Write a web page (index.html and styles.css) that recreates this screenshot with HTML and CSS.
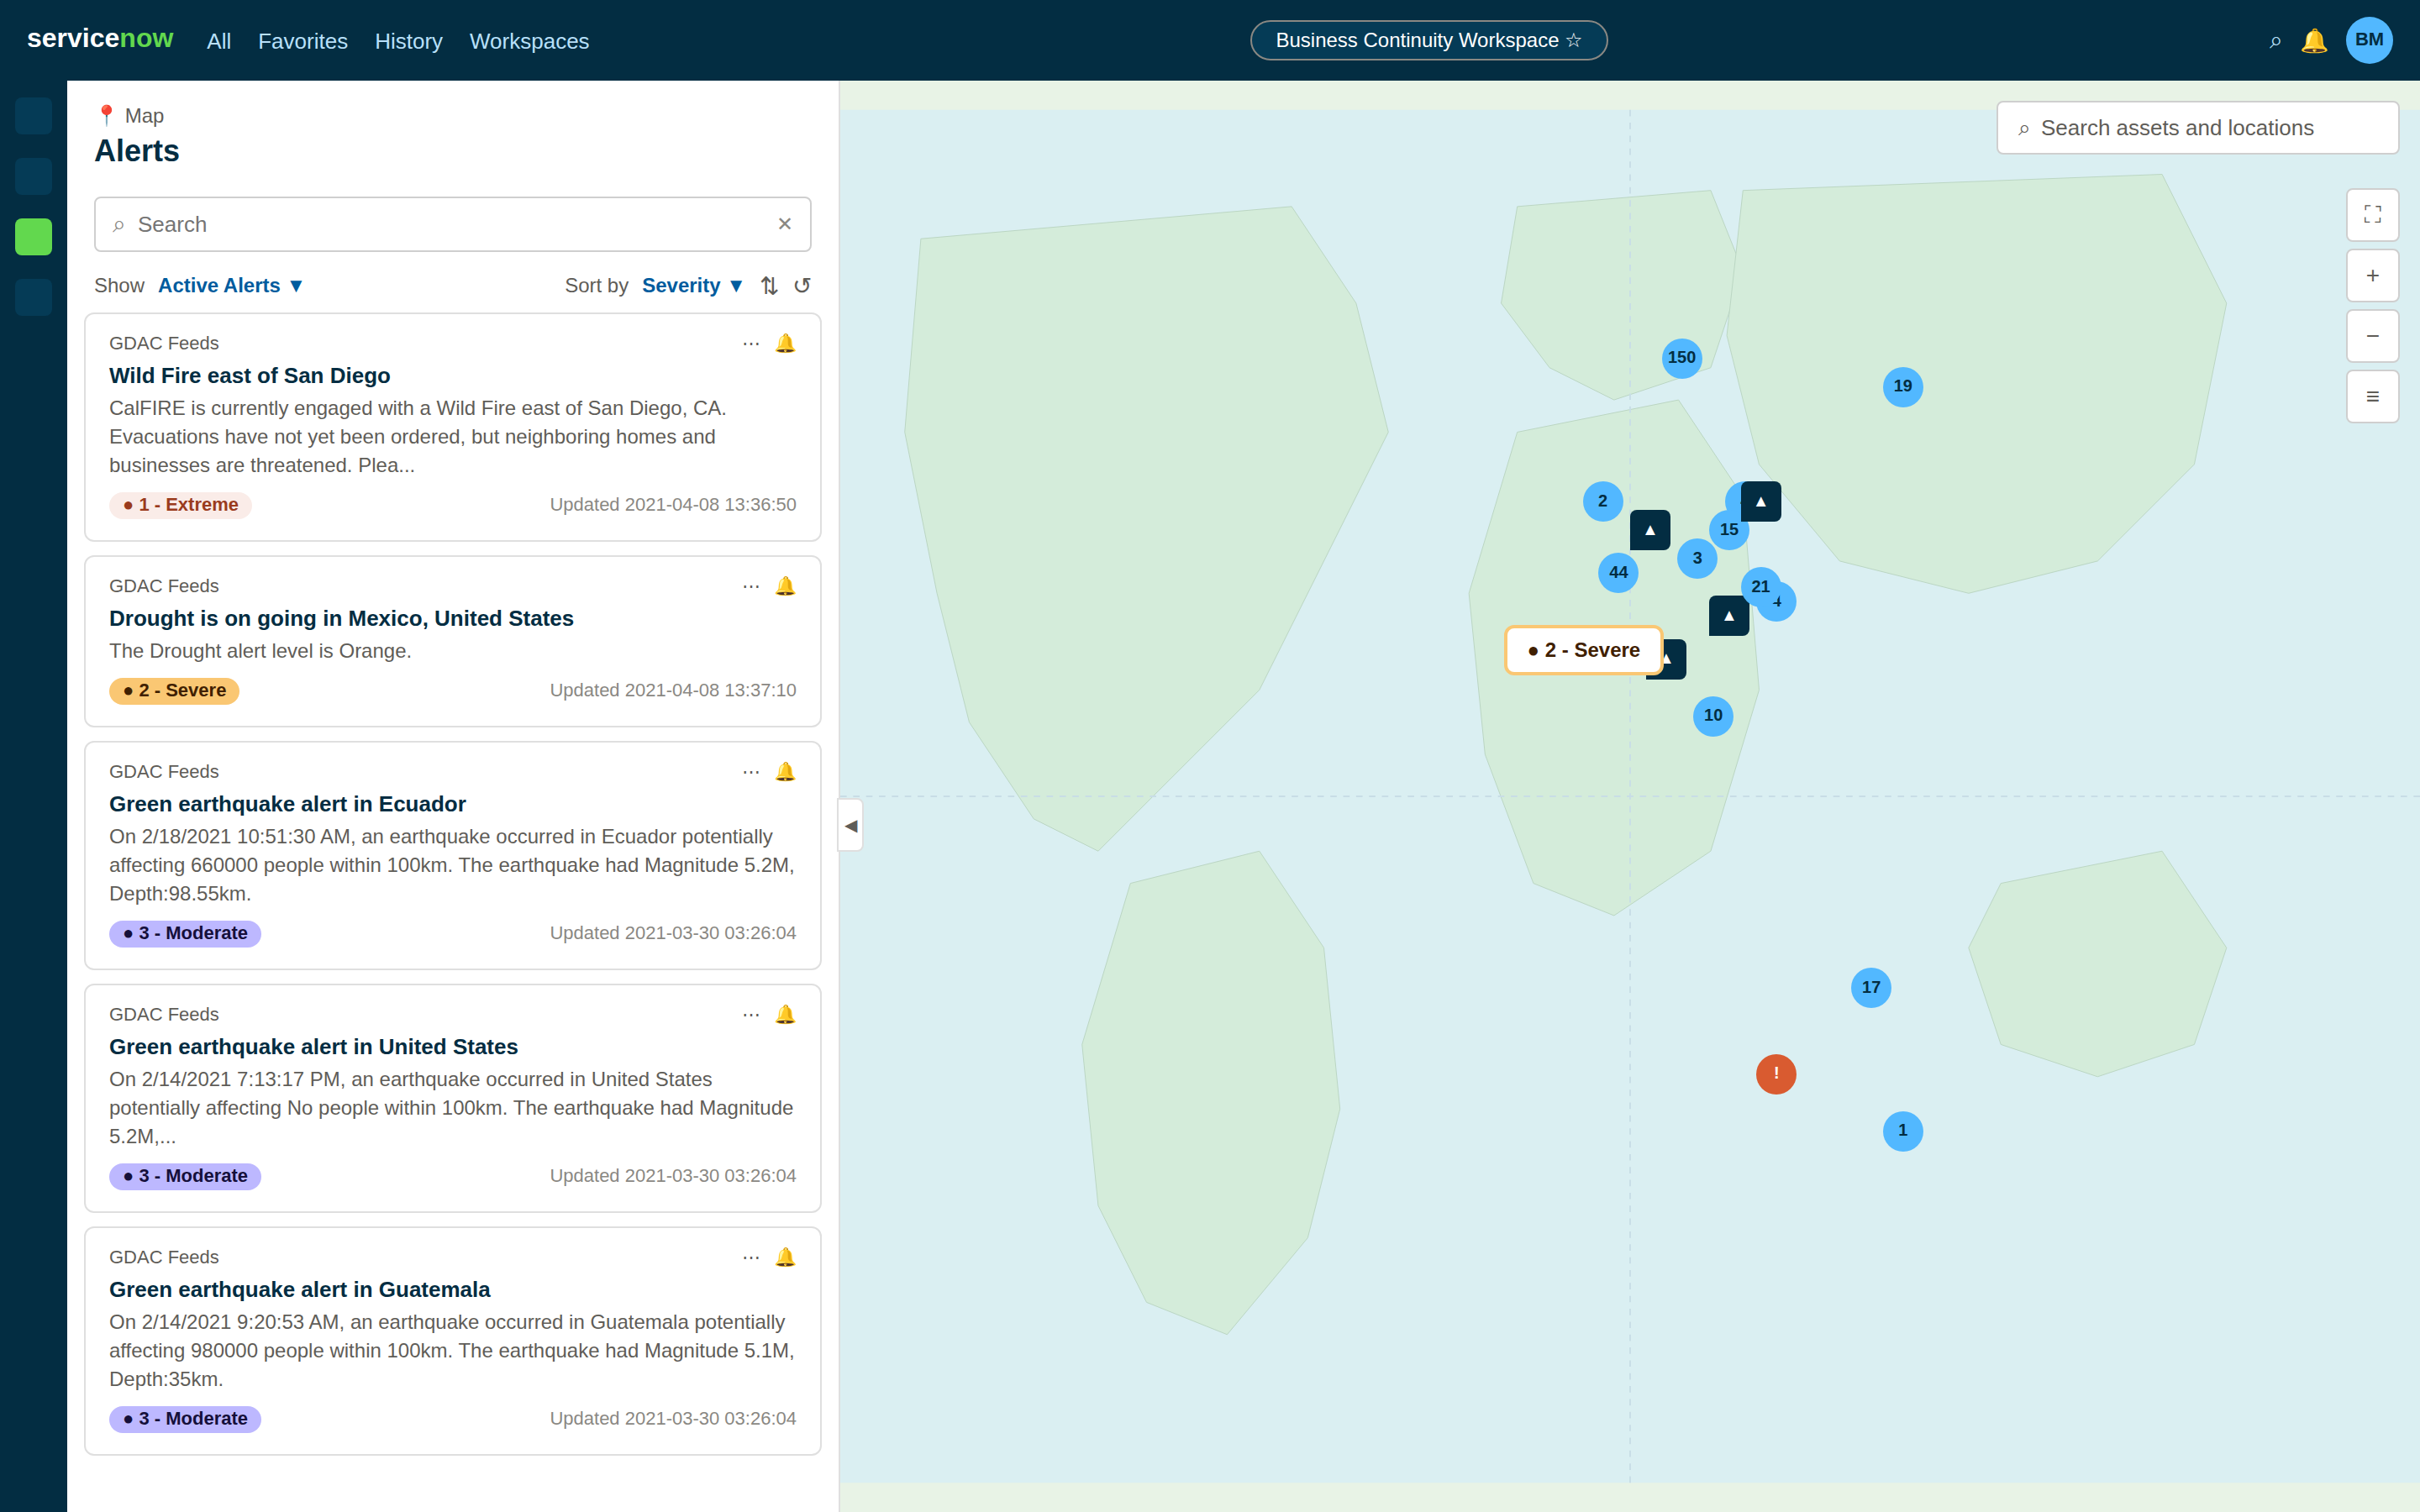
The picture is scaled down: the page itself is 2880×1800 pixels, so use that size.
FILE: index.html
```html
<!DOCTYPE html>
<html lang="en">
<head>
<meta charset="utf-8">
<title>Business Continuity Workspace</title>
<link rel="stylesheet" href="styles.css">
</head>
<body>
<div class="app">
  <header class="topbar">
    <div class="topbar-left">
      <a class="logo" href="#">service<span class="logo-accent">now</span></a>
      <nav class="nav">
        <a href="#">All</a>
        <a href="#">Favorites</a>
        <a href="#">History</a>
        <a href="#">Workspaces</a>
      </nav>
    </div>
    <button class="workspace-pill" type="button">Business Continuity Workspace ☆</button>
    <div class="topbar-right">
      <button class="icon-button" type="button" aria-label="Search">⌕</button>
      <button class="icon-button" type="button" aria-label="Notifications">🔔</button>
      <button class="avatar" type="button">BM</button>
    </div>
  </header>

  <div class="body">
    <nav class="rail">
      <a class="rail-item" href="#" aria-label="Home"></a>
      <a class="rail-item" href="#" aria-label="List"></a>
      <a class="rail-item active" href="#" aria-label="Map"></a>
      <a class="rail-item" href="#" aria-label="Reports"></a>
    </nav>

    <section class="panel">
      <div class="panel-header">
        <div class="crumb">📍 Map</div>
        <h1 class="panel-title">Alerts</h1>
      </div>
      <div class="search-box">
        <span class="search-icon">⌕</span>
        <input class="search-input" type="text" placeholder="Search" aria-label="Search alerts">
        <button class="clear" type="button" aria-label="Clear">✕</button>
      </div>
      <div class="filters">
        <div class="filter-group">
          <span>Show</span>
          <button class="filter-value" type="button">Active Alerts ▼</button>
        </div>
        <div class="filter-group">
          <span>Sort by</span>
          <button class="filter-value" type="button">Severity ▼</button>
          <button class="filter-icon" type="button" aria-label="Sort order">⇅</button>
          <button class="filter-icon" type="button" aria-label="Refresh">↺</button>
        </div>
      </div>

      <div class="cards">
        <article class="card">
          <div class="card-head"><span>GDAC Feeds</span><span class="card-actions"><button type="button" aria-label="More">⋯</button><button type="button" aria-label="Notify">🔔</button></span></div>
          <h2 class="card-title">Wild Fire east of San Diego</h2>
          <p class="card-text">CalFIRE is currently engaged with a Wild Fire east of San Diego, CA. Evacuations have not yet been ordered, but neighboring homes and businesses are threatened. Plea...</p>
          <div class="card-foot"><span class="badge extreme">● 1 - Extreme</span><span class="updated">Updated 2021-04-08 13:36:50</span></div>
        </article>
        <article class="card">
          <div class="card-head"><span>GDAC Feeds</span><span class="card-actions"><button type="button" aria-label="More">⋯</button><button type="button" aria-label="Notify">🔔</button></span></div>
          <h2 class="card-title">Drought is on going in Mexico, United States</h2>
          <p class="card-text">The Drought alert level is Orange.</p>
          <div class="card-foot"><span class="badge severe">● 2 - Severe</span><span class="updated">Updated 2021-04-08 13:37:10</span></div>
        </article>
        <article class="card">
          <div class="card-head"><span>GDAC Feeds</span><span class="card-actions"><button type="button" aria-label="More">⋯</button><button type="button" aria-label="Notify">🔔</button></span></div>
          <h2 class="card-title">Green earthquake alert in Ecuador</h2>
          <p class="card-text">On 2/18/2021 10:51:30 AM, an earthquake occurred in Ecuador potentially affecting 660000 people within 100km. The earthquake had Magnitude 5.2M, Depth:98.55km.</p>
          <div class="card-foot"><span class="badge moderate">● 3 - Moderate</span><span class="updated">Updated 2021-03-30 03:26:04</span></div>
        </article>
        <article class="card">
          <div class="card-head"><span>GDAC Feeds</span><span class="card-actions"><button type="button" aria-label="More">⋯</button><button type="button" aria-label="Notify">🔔</button></span></div>
          <h2 class="card-title">Green earthquake alert in United States</h2>
          <p class="card-text">On 2/14/2021 7:13:17 PM, an earthquake occurred in United States potentially affecting No people within 100km. The earthquake had Magnitude 5.2M,...</p>
          <div class="card-foot"><span class="badge moderate">● 3 - Moderate</span><span class="updated">Updated 2021-03-30 03:26:04</span></div>
        </article>
        <article class="card">
          <div class="card-head"><span>GDAC Feeds</span><span class="card-actions"><button type="button" aria-label="More">⋯</button><button type="button" aria-label="Notify">🔔</button></span></div>
          <h2 class="card-title">Green earthquake alert in Guatemala</h2>
          <p class="card-text">On 2/14/2021 9:20:53 AM, an earthquake occurred in Guatemala potentially affecting 980000 people within 100km. The earthquake had Magnitude 5.1M, Depth:35km.</p>
          <div class="card-foot"><span class="badge moderate">● 3 - Moderate</span><span class="updated">Updated 2021-03-30 03:26:04</span></div>
        </article>
      </div>
      <button class="collapse" type="button" aria-label="Collapse panel">◀</button>
    </section>

    <main class="map">
      <svg class="world" viewBox="0 0 980 852" aria-hidden="true">
        <rect class="sea" width="980" height="852"/>
        <g class="land">
          <polygon points="50,80 280,60 320,120 340,200 260,360 160,460 120,440 80,380 60,300 40,200"/>
          <polygon points="180,480 260,460 300,520 310,620 290,700 240,760 190,740 160,680 150,580"/>
          <polygon points="420,60 540,50 560,100 540,160 480,180 440,160 410,120"/>
          <polygon points="420,200 520,180 560,240 570,360 540,460 480,500 430,480 400,400 390,300"/>
          <polygon points="560,50 820,40 860,120 840,220 780,280 700,300 620,280 570,220 550,140"/>
          <polygon points="720,480 820,460 860,520 840,580 780,600 720,580 700,520"/>
        </g>
        <g class="graticule">
          <line x1="0" y1="426" x2="980" y2="426"/>
          <line x1="490" y1="0" x2="490" y2="852"/>
        </g>
      </svg>

      <button class="pin" type="button" style="left:52%;top:18%">150</button>
      <button class="pin" type="button" style="left:66%;top:20%">19</button>
      <button class="pin" type="button" style="left:47%;top:28%">2</button>
      <button class="pin" type="button" style="left:56%;top:28%">4</button>
      <button class="pin" type="button" style="left:55%;top:30%">15</button>
      <button class="pin" type="button" style="left:53%;top:32%">3</button>
      <button class="pin" type="button" style="left:48%;top:33%">44</button>
      <button class="pin" type="button" style="left:58%;top:35%">4</button>
      <button class="pin" type="button" style="left:54%;top:43%">10</button>
      <button class="pin" type="button" style="left:64%;top:62%">17</button>
      <button class="pin" type="button" style="left:66%;top:72%">1</button>
      <button class="pin site" type="button" style="left:50%;top:30%">▲</button>
      <button class="pin site" type="button" style="left:57%;top:28%">▲</button>
      <button class="pin site" type="button" style="left:55%;top:36%">▲</button>
      <button class="pin site" type="button" style="left:51%;top:39%">▲</button>
      <button class="pin" type="button" style="left:57%;top:34%">21</button>
      <button class="pin alert" type="button" style="left:58%;top:68%">!</button>
      <div class="callout" style="left:42%;top:38%">● 2 - Severe</div>

      <div class="map-search">
        <span class="map-search-icon">⌕</span>
        <input class="map-search-input" type="text" placeholder="Search assets and locations" aria-label="Search assets and locations">
      </div>
      <div class="map-tools">
        <button type="button" aria-label="Full screen">⛶</button>
        <button type="button" aria-label="Zoom in">+</button>
        <button type="button" aria-label="Zoom out">−</button>
        <button type="button" aria-label="Layers">≡</button>
      </div>
    </main>
  </div>
</div>
</body>
</html>
```
FILE: styles.css
```css
:root {
  --navy: #032d42;
  --navy-light: #053b56;
  --blue: #52b8ff;
  --green: #62d84e;
  --link: #005c9e;
  --text: #5f5d58;
  --muted: #8a8883;
  --line: #dfdfdf;
  --field: #cfcfcf;
}

* {
  box-sizing: border-box;
}

body {
  margin: 0;
  font-family: "Liberation Sans", Arial, sans-serif;
  font-size: 24px;
  color: var(--text);
}

button {
  margin: 0;
  padding: 0;
  border: 0;
  background: none;
  color: inherit;
  font: inherit;
  cursor: pointer;
}

input {
  min-width: 0;
  padding: 0;
  border: 0;
  outline: 0;
  background: none;
  font: inherit;
  color: var(--text);
}

a {
  color: inherit;
  text-decoration: none;
}

.app {
  display: flex;
  flex-direction: column;
  min-height: 100vh;
}

/* Top bar */

.topbar {
  display: flex;
  align-items: center;
  justify-content: space-between;
  height: 96px;
  padding: 0 32px;
  background: var(--navy);
}

.topbar-left {
  display: flex;
  align-items: center;
  gap: 40px;
}

.logo {
  padding-bottom: 6px;
  font-size: 32px;
  font-weight: 700;
  color: #fff;
}

.logo-accent {
  color: var(--green);
}

.nav {
  display: flex;
  gap: 32px;
  padding-top: 2px;
  font-size: 26px;
  color: #b8e0fa;
}

.workspace-pill {
  height: 48px;
  padding: 0 28px;
  border: 2px solid #8a8883;
  border-radius: 24px;
  background: var(--navy-light);
  color: #fff;
}

.topbar-right {
  display: flex;
  align-items: center;
  gap: 20px;
  color: #b8e0fa;
}

.icon-button {
  font-size: 28px;
}

.avatar {
  width: 56px;
  height: 56px;
  padding-bottom: 2px;
  border-radius: 50%;
  background: var(--blue);
  color: var(--navy);
  font-size: 22px;
  font-weight: 700;
}

/* Page body */

.body {
  display: flex;
  flex: 1;
}

.rail {
  display: flex;
  flex-direction: column;
  align-items: center;
  gap: 28px;
  width: 80px;
  padding-top: 20px;
  background: var(--navy);
}

.rail-item {
  width: 44px;
  height: 44px;
  border-radius: 8px;
  background: var(--navy-light);
}

.rail-item.active {
  background: var(--green);
}

/* Alerts panel */

.panel {
  position: relative;
  z-index: 1;
  width: 920px;
  border-right: 2px solid var(--line);
  background: #fff;
}

.panel-header {
  padding: 28px 32px 32px;
}

.crumb {
  line-height: 28px;
}

.panel-title {
  margin: 6px 0 0;
  font-size: 36px;
  line-height: 44px;
  color: var(--navy);
}

.search-box {
  display: flex;
  align-items: center;
  gap: 14px;
  height: 66px;
  margin: 0 32px;
  padding: 0 20px;
  border: 2px solid var(--field);
  border-radius: 8px;
  font-size: 26px;
}

.search-icon {
  font-size: 28px;
  color: var(--muted);
}

.search-input {
  flex: 1;
}

.search-input::placeholder {
  color: #757575;
}

.clear {
  font-size: 24px;
  color: var(--muted);
}

.filters {
  display: flex;
  align-items: center;
  justify-content: space-between;
  height: 72px;
  padding: 8px 32px 0;
}

.filter-group {
  display: flex;
  align-items: center;
  gap: 16px;
}

.filter-value {
  font-weight: 700;
  color: var(--link);
}

.filter-icon {
  font-size: 28px;
}

.cards {
  display: flex;
  flex-direction: column;
  gap: 16px;
  padding: 0 20px 40px;
}

.card {
  padding: 20px 28px 25px;
  border: 2px solid var(--line);
  border-radius: 12px;
}

.card-head {
  display: flex;
  align-items: center;
  justify-content: space-between;
  height: 29px;
  font-size: 22px;
}

.card-actions {
  display: flex;
  align-items: center;
  gap: 16px;
}

.card-title {
  margin: 8px 0 6px;
  font-size: 26px;
  line-height: 32px;
  color: var(--navy);
}

.card-text {
  margin: 0 0 15px;
  line-height: 34px;
}

.card-foot {
  display: flex;
  align-items: center;
  justify-content: space-between;
  font-size: 22px;
  line-height: 24px;
}

.badge {
  padding: 3px 16px 5px;
  border-radius: 16px;
  font-weight: 700;
}

.badge.extreme {
  background: #faece8;
  color: #9a3b1d;
}

.badge.severe {
  background: #fac773;
  color: #402000;
}

.badge.moderate {
  background: #bdb8ff;
  color: #150f3a;
}

.updated {
  padding-bottom: 2px;
  color: var(--muted);
}

.collapse {
  position: absolute;
  top: calc(50% + 2px);
  right: -30px;
  width: 32px;
  height: 64px;
  border: 2px solid var(--line);
  border-radius: 0 8px 8px 0;
  background: #fff;
  font-size: 20px;
}

/* Map */

.map {
  position: relative;
  flex: 1;
  background: #e8f3e6;
}

.world {
  position: absolute;
  inset: 0;
  width: 100%;
  height: 100%;
}

.sea {
  fill: #daeff2;
}

.land {
  fill: #d4ecda;
  stroke: #bbd6c3;
}

.land polygon {
  stroke-width: 1;
  vector-effect: non-scaling-stroke;
}

.graticule {
  stroke: #c8dde6;
  stroke-width: 1;
  stroke-dasharray: 4 4;
}

.pin {
  position: absolute;
  width: 48px;
  height: 48px;
  padding-bottom: 2px;
  border-radius: 50%;
  background: var(--blue);
  color: var(--navy);
  font-size: 20px;
  font-weight: 700;
}

.pin.site {
  border-radius: 8px 8px 8px 0;
  background: var(--navy);
  color: #fff;
}

.pin.alert {
  background: #d95b30;
  color: #fff;
}

.callout {
  position: absolute;
  padding: 12px 24px;
  border: 4px solid #fac773;
  border-radius: 12px;
  background: #fff;
  color: #402000;
  font-weight: 700;
  line-height: 28px;
  white-space: nowrap;
}

.map-search {
  position: absolute;
  top: 24px;
  right: 24px;
  display: flex;
  align-items: center;
  gap: 12px;
  width: 480px;
  height: 64px;
  padding: 0 24px;
  border: 2px solid var(--field);
  border-radius: 8px;
  background: #fff;
  font-size: 26px;
}

.map-search-input {
  flex: 1;
}

.map-search-input::placeholder {
  color: var(--text);
}

.map-tools {
  position: absolute;
  top: 128px;
  right: 24px;
  display: flex;
  flex-direction: column;
  gap: 8px;
}

.map-tools button {
  width: 64px;
  height: 64px;
  border: 2px solid var(--field);
  border-radius: 8px;
  background: #fff;
  font-size: 28px;
}
```
